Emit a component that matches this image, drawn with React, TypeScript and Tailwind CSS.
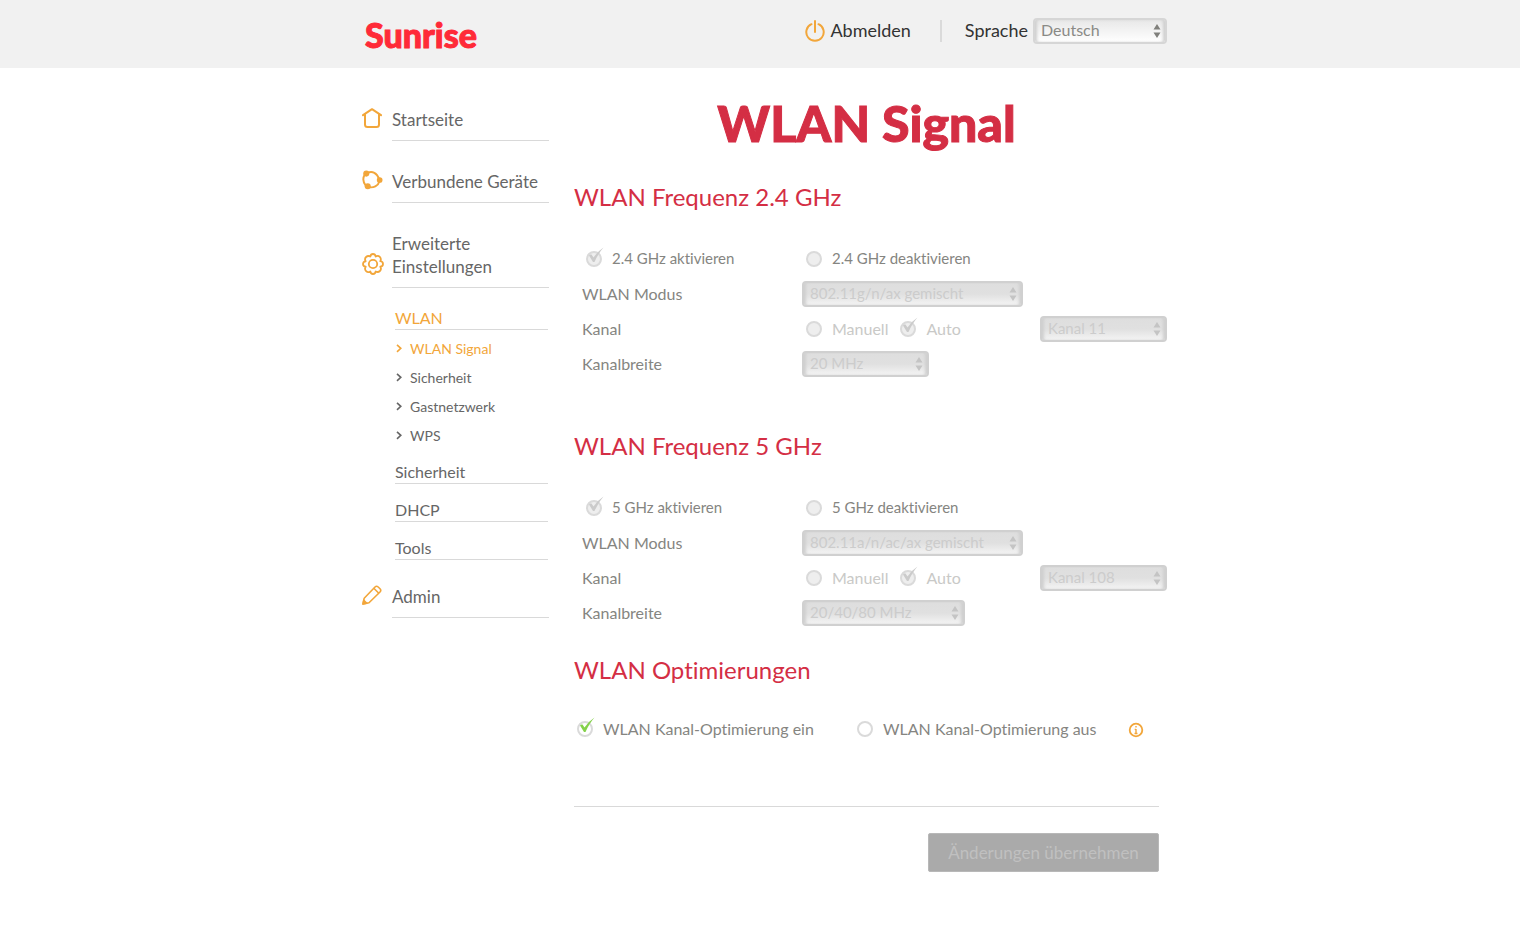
import { useState } from "react";
import type { ReactNode } from "react";

interface BandProps {
  id: string;
  name: string;
  mode: string;
  channel: string;
  width: string;
  widthClass: string;
}

const HomeIcon = () => (
  <svg width="20" height="20" viewBox="0 0 20 20" fill="none" stroke="#f2a63a" strokeWidth="2" strokeLinecap="round" strokeLinejoin="round">
    <path d="M1 7.2 10 1.2 19 7.2" />
    <path d="M3 6.5V16.5Q3 19 5.5 19H14.5Q17 19 17 16.5V6.5" />
  </svg>
);

const DevicesIcon = () => (
  <svg width="21" height="20" viewBox="0 0 22 20" fill="none" stroke="#f2a63a" strokeWidth="2">
    <path d="M6 2.3C11 .3 15.500 2.500 18 9M18.500 11C17 16 12 19 6 17.200M3 4C.600 8 .800 12 4 16" />
    <circle cx="4.500" cy="3.300" r="3.200" fill="#f2a63a" stroke="none" />
    <circle cx="18.500" cy="10" r="3" fill="#f2a63a" stroke="none" />
    <circle cx="6" cy="16.500" r="3.200" fill="#f2a63a" stroke="none" />
  </svg>
);

const GearIcon = () => (
  <svg width="22" height="22" viewBox="0 0 22 22" fill="none" stroke="#f2a63a" strokeWidth="1.800" strokeLinejoin="round">
    <path d="M8.300 3.600Q8.600 1 11 1T13.700 3.600Q16 2 17.800 3.900T18.300 8.200Q21 8.600 21 11T18.300 13.700Q19.800 16.200 17.900 18T13.700 18.400Q13.400 21 11 21T8.300 18.400Q6 20 4.100 18.100T3.700 13.700Q1 13.400 1 11T3.700 8.300Q2.200 5.800 4.100 4T8.300 3.600Z" />
    <circle cx="11" cy="11" r="4.200" />
  </svg>
);

const PencilIcon = () => (
  <svg width="20" height="20" viewBox="0 0 20 20" fill="none" stroke="#f2a63a" strokeWidth="1.600" strokeLinejoin="round">
    <path d="M1 19 2.200 13.200 13 2Q14.500.500 16.200 2L18 3.800Q19.500 5.500 18 7L7 17.700Z" />
    <path d="M11.800 3.200 16.800 8.200" />
    <path d="M1 19 1.800 15.200 4.800 18.200Z" fill="#f2a63a" />
  </svg>
);

const PowerIcon = () => (
  <svg width="20" height="22" viewBox="0 0 20 22" fill="none" stroke="#f2a63a" strokeWidth="2" strokeLinecap="round">
    <path d="M10 1V12" />
    <path d="M6.500 4.200A8.700 8.700 0 1 0 13.500 4.200" />
  </svg>
);

const InfoIcon = () => (
  <svg width="16" height="16" viewBox="0 0 16 16" fill="none" stroke="#f2a63a" strokeWidth="1.800">
    <circle cx="8" cy="8" r="6.300" />
    <path d="M8 7V11.800M8 4V5.600M6.700 7.400H8M6.500 11.500H9.500" strokeWidth="1.400" />
  </svg>
);

const Chevron = () => (
  <svg width="6" height="10" viewBox="0 0 6 10" fill="none" stroke="currentColor" strokeWidth="1.600">
    <path d="M1 .8 4.800 4.300 1 7.800" />
  </svg>
);

interface RadioProps {
  name: string;
  label: string;
  className?: string;
  checked?: boolean;
  disabled?: boolean;
  onChange?: () => void;
}

const Radio = ({ name, label, className = "", checked = false, disabled, onChange }: RadioProps) => (
  <label className={`flex items-center gap-[10px] ${className}`}>
    <span className="relative flex">
      <input
        type="radio"
        name={name}
        checked={checked}
        disabled={disabled}
        onChange={onChange}
        readOnly={!onChange}
        className="size-4 appearance-none rounded-full border-2 border-[#dadada] bg-white disabled:bg-[#eeeeee]"
      />
      {checked && (
        <svg className="pointer-events-none absolute -top-1 left-0" width="18" height="18" viewBox="0 0 18 18">
          <path d="M3 8.500Q4 7 5.500 7.500L7.500 10.500Q12 4 17.500.500 12.500 6 8.500 15L7 15Z" fill={disabled ? "#cbcbcb" : "#84d14b"} />
        </svg>
      )}
    </span>
    {label}
  </label>
);

interface SelectProps {
  label: string;
  options: string[];
  className: string;
  disabled?: boolean;
}

const Select = ({ label, options, className, disabled }: SelectProps) => (
  <span className={`relative flex h-[26px] ${className}`}>
    <select
      aria-label={label}
      disabled={disabled}
      className="w-full appearance-none rounded border-2 border-[#d6d6d6] bg-linear-to-b from-[#e8e8e8] to-white pb-[2px] pl-[6px] leading-5 text-[#8a8a86] shadow-[inset_3px_0_3px_-1px_#cfcfcf,inset_-3px_0_3px_-1px_#cfcfcf] disabled:border-[#d0d0d0] disabled:from-[#dedede] disabled:via-[#e0e0e0] disabled:to-[#f4f4f4] disabled:text-[#cccccc] disabled:opacity-100"
    >
      {options.map((option) => (
        <option key={option}>{option}</option>
      ))}
    </select>
    <svg
      className={`pointer-events-none absolute top-[6px] right-[6px] ${disabled ? "text-[#c4c4c4]" : "text-[#80807c]"}`}
      width="8"
      height="14"
      viewBox="0 0 8 14"
      fill="currentColor"
    >
      <path d="M4 0 7.500 5.500H.5ZM4 14 7.500 8.500H.5Z" />
    </svg>
  </span>
);

const Row = ({ label, children }: { label: ReactNode; children: ReactNode }) => (
  <div className="grid h-[35px] grid-cols-[220px_1fr] items-center pl-2">
    <div>{label}</div>
    <div className="flex items-center">{children}</div>
  </div>
);

const heading = "text-2xl leading-8 text-[#d42e44]";

const Band = ({ id, name, mode, channel, width, widthClass }: BandProps) => (
  <section>
    <h2 className={heading}>WLAN Frequenz {name}</h2>
    <div className="mt-7">
      <Row
        label={
          <div className="pl-1">
            <Radio name={`${id}-active`} label={`${name} aktivieren`} className="text-[15px]" checked disabled />
          </div>
        }
      >
        <div className="pl-1">
          <Radio name={`${id}-active`} label={`${name} deaktivieren`} className="text-[15px]" disabled />
        </div>
      </Row>
      <Row label="WLAN Modus">
        <Select label="WLAN Modus" options={[mode]} className="w-[221px] text-[15px]" disabled />
      </Row>
      <Row label="Kanal">
        <div className="flex gap-3 pl-1 text-[#c9c9c7]">
          <Radio name={`${id}-channel`} label="Manuell" disabled />
          <Radio name={`${id}-channel`} label="Auto" checked disabled />
        </div>
        <Select label="Kanal" options={[channel]} className="ml-auto w-[127px] text-[15px]" disabled />
      </Row>
      <Row label="Kanalbreite">
        <Select label="Kanalbreite" options={[width]} className={`text-[15px] ${widthClass}`} disabled />
      </Row>
    </div>
  </section>
);

const NavItem = ({ icon, children }: { icon: ReactNode; children: ReactNode }) => (
  <a href="#" className="flex items-end">
    <span className="flex w-8 shrink-0 justify-start pb-[13px] pl-[2px]">{icon}</span>
    <span className="grow border-b border-[#d9d9d9] pb-[9px] text-[17px] leading-[23px]">{children}</span>
  </a>
);

const subItem = "block border-b border-[#d9d9d9] pb-[2px] leading-[18px]";

const Sidebar = () => (
  <nav className="w-[189px] shrink-0 pt-10 text-[#666666]">
    <NavItem icon={<HomeIcon />}>Startseite</NavItem>
    <div className="mt-[29px]">
      <NavItem icon={<DevicesIcon />}>Verbundene Geräte</NavItem>
    </div>
    <div className="mt-[29px]">
      <NavItem icon={<GearIcon />}>
        Erweiterte
        <br />
        Einstellungen
      </NavItem>
    </div>
    <div className="mt-[21px] pr-[1px] pl-[35px]">
      <a href="#" className={`${subItem} text-[#f2a63a]`}>
        WLAN
      </a>
      <ul className="mt-1 text-sm leading-[29px]">
        {["WLAN Signal", "Sicherheit", "Gastnetzwerk", "WPS"].map((item, i) => (
          <li key={item}>
            <a href="#" className={`flex items-center gap-2 pl-[1px] ${i === 0 ? "text-[#f2a63a]" : ""}`}>
              <Chevron />
              {item}
            </a>
          </li>
        ))}
      </ul>
      <div className="mt-[13px] flex flex-col gap-[17px]">
        {["Sicherheit", "DHCP", "Tools"].map((item) => (
          <a key={item} href="#" className={subItem}>
            {item}
          </a>
        ))}
      </div>
    </div>
    <div className="mt-[25px]">
      <NavItem icon={<PencilIcon />}>Admin</NavItem>
    </div>
  </nav>
);

export default function App() {
  const [optimize, setOptimize] = useState(true);

  return (
    <div className="min-h-screen bg-white pb-10 font-['Lato','Open_Sans',sans-serif] text-base [font-variant-ligatures:none]">
      <header className="bg-[#f1f1f1]">
        <div className="mx-auto flex h-[68px] max-w-[816px] items-start justify-between pr-[1px] pl-[13px]">
          <a href="#" className="mt-[15px] text-[34px] leading-10 font-black text-[#ff2a38] [-webkit-text-stroke:1px_#ff2a38]">
            Sunrise
          </a>
          <div className="mt-[17px] flex items-center text-lg leading-[26px] text-[#333333]">
            <button type="button" className="flex items-center gap-[5px]">
              <PowerIcon />
              <span className="pb-[2px]">Abmelden</span>
            </button>
            <span className="mr-[23px] ml-[29px] h-[22px] w-[2px] bg-[#dadada]" />
            <span className="mr-[5px] pb-[2px]">Sprache</span>
            <Select label="Sprache" options={["Deutsch", "English", "Français", "Italiano"]} className="w-[134px] text-base" />
          </div>
        </div>
      </header>

      <div className="mx-auto flex max-w-[816px] pl-2">
        <Sidebar />
        <main className="ml-[25px] grow pt-7 pr-[1px] text-[#858581]">
          <h1 className="pr-2 text-center text-[50px] leading-[54px] font-black text-[#d42e44] [-webkit-text-stroke:1px_#d42e44]">WLAN Signal</h1>
          <div className="mt-[31px]">
            <Band id="band24" name="2.4 GHz" mode="802.11g/n/ax gemischt" channel="Kanal 11" width="20 MHz" widthClass="w-[127px]" />
          </div>
          <div className="mt-[49px]">
            <Band id="band5" name="5 GHz" mode="802.11a/n/ac/ax gemischt" channel="Kanal 108" width="20/40/80 MHz" widthClass="w-[163px]" />
          </div>

          <section className="mt-6">
            <h2 className={heading}>WLAN Optimierungen</h2>
            <div className="mt-[25px] flex h-[35px] items-center pr-[23px] pl-[3px]">
              <div className="w-[280px]">
                <Radio name="optimize" label="WLAN Kanal-Optimierung ein" checked={optimize} onChange={() => setOptimize(true)} />
              </div>
              <Radio name="optimize" label="WLAN Kanal-Optimierung aus" checked={!optimize} onChange={() => setOptimize(false)} />
              <button type="button" aria-label="Info" className="ml-auto pt-[2px]">
                <InfoIcon />
              </button>
            </div>
          </section>

          <div className="mt-[60px] mr-2 flex justify-end border-t border-[#d9d9d9] pt-[26px]">
            <button type="button" disabled className="h-[39px] w-[231px] rounded-xs border border-[#b8b8b8] bg-[#aaaaaa] text-[17px] text-[#c0c0c0]">
              Änderungen übernehmen
            </button>
          </div>
        </main>
      </div>
    </div>
  );
}
